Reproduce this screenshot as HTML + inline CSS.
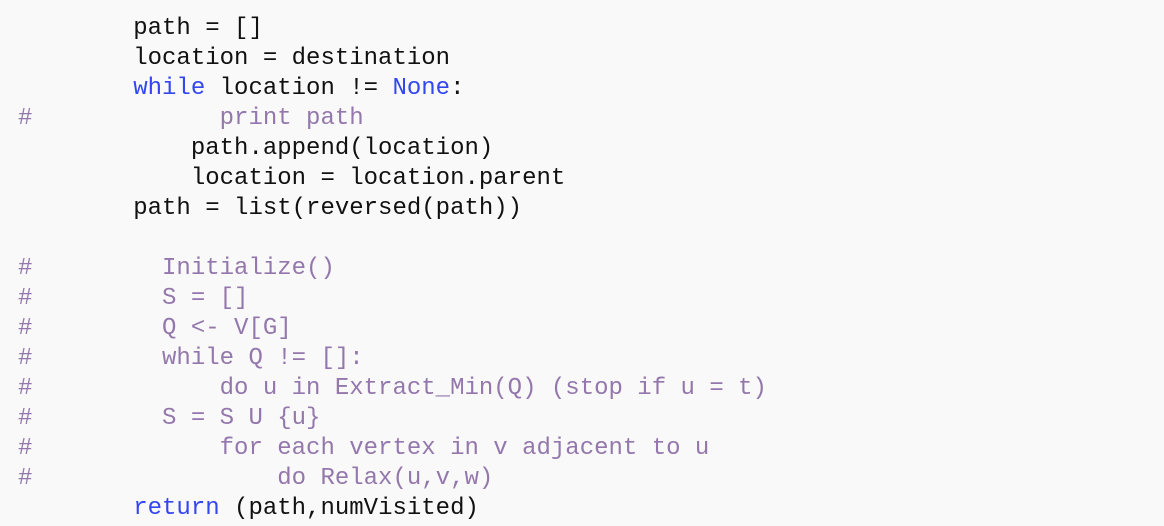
<html><head><style>
body{margin:0;background:#f9f9f9;width:1164px;height:526px;overflow:hidden}
pre{margin:0;position:absolute;left:18px;top:14px;font-family:"Liberation Mono",monospace;font-size:24px;line-height:30px;color:#111}
.k{color:#3346f0}.c{color:#9477ac}
</style></head><body><pre>        path = []
        location = destination
        <span class="k">while</span> location != <span class="k">None</span>:
<span class="c">#             print path</span>
            path.append(location)
            location = location.parent
        path = list(reversed(path))

<span class="c">#         Initialize()</span>
<span class="c">#         S = []</span>
<span class="c">#         Q &lt;- V[G]</span>
<span class="c">#         while Q != []:</span>
<span class="c">#             do u in Extract_Min(Q) (stop if u = t)</span>
<span class="c">#         S = S U {u}</span>
<span class="c">#             for each vertex in v adjacent to u</span>
<span class="c">#                 do Relax(u,v,w)</span>
        <span class="k">return</span> (path,numVisited)
</pre></body></html>
